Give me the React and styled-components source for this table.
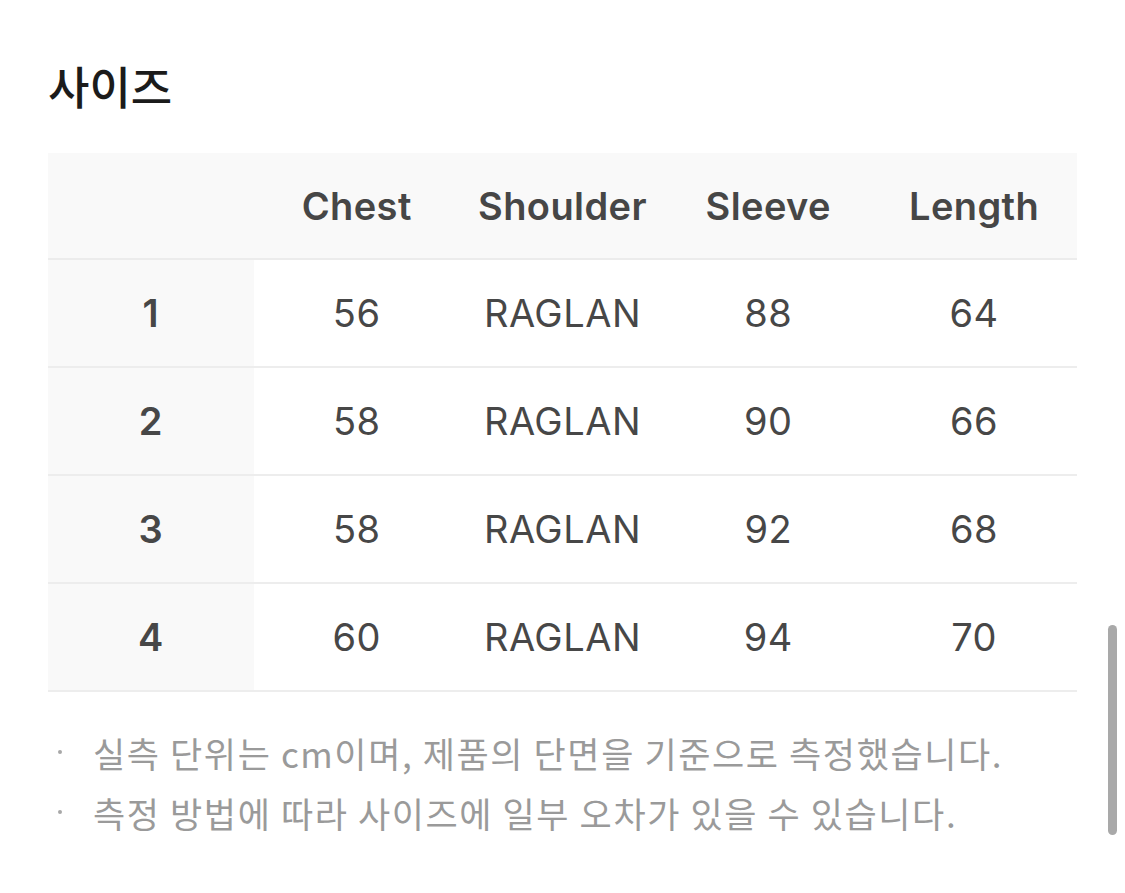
import React from 'react'
import styled, { createGlobalStyle } from 'styled-components'

const GlobalStyle = createGlobalStyle`
  html, body {
    margin: 0;
    padding: 0;
    background: #ffffff;
  }
  body {
    font-family: Inter, "Noto Sans CJK KR", sans-serif;
    -webkit-font-smoothing: antialiased;
  }
`

const Page = styled.div`
  position: relative;
  width: 1125px;
  height: 893px;
  box-sizing: border-box;
  padding: 56px 48px 0 48px;
  overflow: hidden;
`

const Title = styled.h2`
  margin: 0;
  font-family: "Noto Sans CJK KR", sans-serif;
  font-size: 45px;
  font-weight: 500;
  line-height: 60px;
  color: #1b1b1b;
  letter-spacing: 0;
`

const SizeTable = styled.table`
  margin-top: 37px;
  width: 1029px;
  border-collapse: collapse;
  table-layout: fixed;
`

const HeadCell = styled.th`
  height: 105px;
  background: #f9f9f9;
  border-bottom: 2px solid #ececec;
  font-size: 38px;
  font-weight: 600;
  letter-spacing: 0.4px;
  color: #464646;
  text-align: center;
  padding: 0;
`

const Cell = styled.td`
  height: 106px;
  border-bottom: 2px solid #ededed;
  background: ${props => props.label ? '#f9f9f9' : '#ffffff'};
  font-size: 38px;
  font-weight: ${props => props.label ? 600 : 400};
  letter-spacing: 0.5px;
  color: #474747;
  text-align: center;
  padding: 0;
`

const Notes = styled.ul`
  list-style: none;
  margin: 30px 0 0 0;
  padding: 0;
`

const Note = styled.li`
  display: flex;
  align-items: center;
  height: 60px;
  font-family: "Noto Sans CJK KR", sans-serif;
  font-size: 35px;
  color: #9a9a9a;
  letter-spacing: 1.6px;
`

const Bullet = styled.span`
  width: 4px;
  height: 4px;
  margin: 0 31px 0 10px;
  border-radius: 50%;
  background: #a8a8a8;
  flex-shrink: 0;
`

const ScrollThumb = styled.div`
  position: absolute;
  right: 8px;
  top: 625px;
  width: 9px;
  height: 210px;
  border-radius: 5px;
  background: #a9a9a9;
`

const headers = ['', 'Chest', 'Shoulder', 'Sleeve', 'Length']

const rows = [
  ['1', '56', 'RAGLAN', '88', '64'],
  ['2', '58', 'RAGLAN', '90', '66'],
  ['3', '58', 'RAGLAN', '92', '68'],
  ['4', '60', 'RAGLAN', '94', '70'],
]

const notes = [
  '실측 단위는 cm이며, 제품의 단면을 기준으로 측정했습니다.',
  '측정 방법에 따라 사이즈에 일부 오차가 있을 수 있습니다.',
]

export default function App() {
  return (
    <Page>
      <GlobalStyle />
      <Title>사이즈</Title>
      <SizeTable>
        <thead>
          <tr>
            {headers.map((h, i) => <HeadCell key={i}>{h}</HeadCell>)}
          </tr>
        </thead>
        <tbody>
          {rows.map(row => (
            <tr key={row[0]}>
              {row.map((v, i) => (
                <Cell key={i} label={i === 0}>{v}</Cell>
              ))}
            </tr>
          ))}
        </tbody>
      </SizeTable>
      <Notes>
        {notes.map(n => (
          <Note key={n}>
            <Bullet />
            {n}
          </Note>
        ))}
      </Notes>
      <ScrollThumb />
    </Page>
  )
}
